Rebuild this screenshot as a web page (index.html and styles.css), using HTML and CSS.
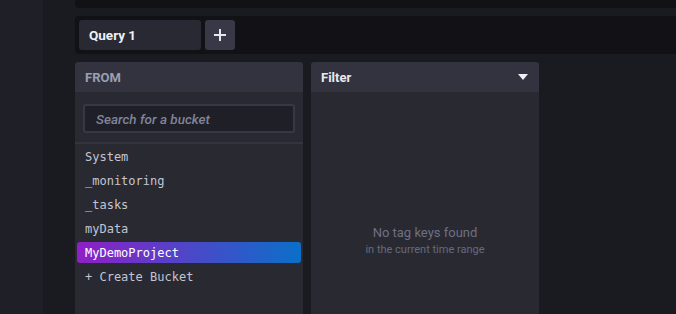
FILE: index.html
```html
<!DOCTYPE html>
<html>
<head>
<meta charset="utf-8">
<link rel="stylesheet" href="styles.css">
</head>
<body>
<div class="app">
  <aside class="sidebar"></aside>
  <main class="main">
    <div class="topbox"></div>
    <div class="querybar">
      <div class="tab">Query 1</div>
      <div class="addbtn">
        <svg width="14" height="14" viewBox="0 0 14 14"><path d="M7 1v12M1 7h12" stroke="#e6e7ee" stroke-width="2"/></svg>
      </div>
    </div>
    <div class="panels">
      <section class="panel">
        <div class="panel-head"><span class="title-muted">FROM</span></div>
        <div class="panel-body">
          <div class="search-wrap">
            <div class="search"><span class="placeholder">Search for a bucket</span></div>
          </div>
          <div class="sep"></div>
          <ul class="list">
            <li class="item">System</li>
            <li class="item">_monitoring</li>
            <li class="item">_tasks</li>
            <li class="item">myData</li>
            <li class="item selected">MyDemoProject</li>
            <li class="item">+ Create Bucket</li>
          </ul>
        </div>
      </section>
      <section class="panel">
        <div class="panel-head between">
          <span class="title">Filter</span>
          <svg class="caret" width="10" height="6" viewBox="0 0 10 6"><path d="M0 0h10L5 6z" fill="#eef0f6"/></svg>
        </div>
        <div class="panel-body empty">
          <div class="empty-main">No tag keys found</div>
          <div class="empty-sub">in the current time range</div>
        </div>
      </section>
    </div>
  </main>
</div>
</body>
</html>
```

FILE: styles.css
```css
* { box-sizing: border-box; }
html, body { margin: 0; padding: 0; }
body {
  background: #1a1a21;
  font-family: Roboto, "Liberation Sans", sans-serif;
  width: 676px;
  height: 314px;
  overflow: hidden;
}
.app { display: flex; height: 314px; }
.sidebar { width: 43px; background: #1f1f27; flex: none; }
.main { flex: 1; padding-left: 32px; display: flex; flex-direction: column; }
.topbox {
  height: 8px;
  background: #111116;
  border-radius: 0 0 0 4px;
  margin-bottom: 8px;
}
.querybar {
  height: 38px;
  background: #111116;
  border-radius: 4px 0 0 4px;
  padding: 4px;
  display: flex;
  gap: 4px;
}
.tab {
  width: 122px;
  background: #292933;
  border-radius: 3px;
  color: #eef0f6;
  font-weight: 700;
  font-size: 13.5px;
  padding-left: 10px;
  display: flex;
  align-items: center;
}
.addbtn {
  width: 30px;
  background: #383846;
  border-radius: 3px;
  display: flex;
  align-items: center;
  justify-content: center;
}
.panels { display: flex; gap: 8px; margin-top: 8px; flex: 1; }
.panel { width: 228px; display: flex; flex-direction: column; border-radius: 3px 3px 0 0; overflow: hidden; }
.panel-head {
  height: 30px;
  background: #333340;
  display: flex;
  align-items: center;
  padding: 0 10px;
  font-size: 13px;
  font-weight: 700;
}
.between { justify-content: space-between; padding-right: 11px; }
.title-muted { color: #9a9fb1; }
.title { color: #e8e9ef; }
.panel-body { flex: 1; background: #292932; }
.search-wrap { padding: 12px 8px 9px; }
.search {
  height: 29px;
  background: #1f1f27;
  border: 2px solid #383845;
  border-radius: 3px;
  display: flex;
  align-items: center;
  padding-left: 11px;
}
.placeholder { color: #7f849a; font-style: italic; font-size: 13.5px; font-weight: 500; }
.sep { height: 2px; background: #34343f; }
.list { list-style: none; margin: 0; padding: 2px 2px 0; }
.item {
  height: 21px;
  margin-bottom: 3px;
  border-radius: 3px;
  padding-left: 8px;
  display: flex;
  align-items: center;
  font-family: "DejaVu Sans Mono", "Liberation Mono", monospace;
  font-size: 12px;
  color: #c3c5d1;
}
.item.selected {
  background: linear-gradient(90deg, #8f1fc6, #0a6fc9);
  color: #ffffff;
}
.empty {
  display: flex;
  flex-direction: column;
  align-items: center;
  padding-top: 132px;
}
.empty-main { color: #6d7083; font-size: 13px; line-height: 17px; }
.empty-sub { color: #676a7c; font-size: 11px; line-height: 17px; }
```
